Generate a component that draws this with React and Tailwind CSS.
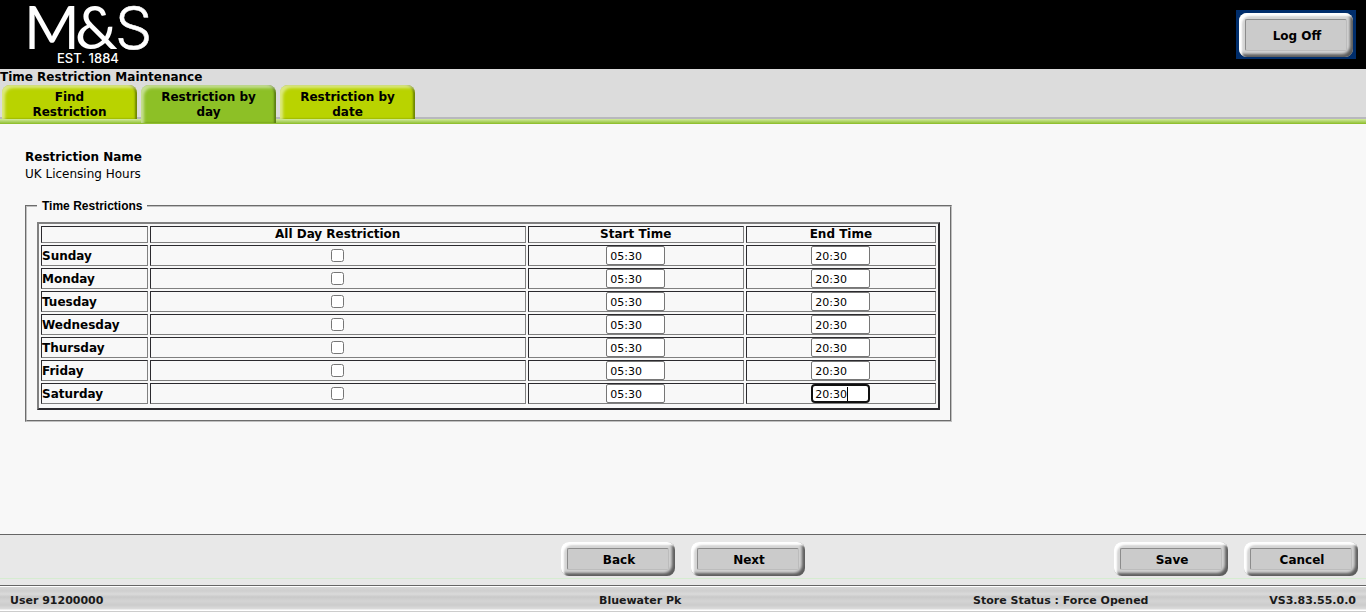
const days = ['Sunday', 'Monday', 'Tuesday', 'Wednesday', 'Thursday', 'Friday', 'Saturday'];
const tabs = [
  { first: 'Find', second: 'Restriction' },
  { first: 'Restriction by', second: 'day', active: true },
  { first: 'Restriction by', second: 'date' },
];

function Logo() {
  return (
    <svg className="ml-6 block h-[69px] w-[132px] overflow-visible" viewBox="24 0 132 69" role="img" aria-label="M&S EST. 1884">
      <g fill="#fff" fontFamily="Lato, sans-serif">
        <text x="24 75" y="49" fontSize="60">M&amp;</text>
        <text x="115" y="49" fontSize="59" fontFamily="Inter, sans-serif" fontWeight="300" stroke="#fff" strokeWidth="0.5">S</text>
        <text x="57" y="63" fontSize="13" fontFamily="Inter, sans-serif" fontWeight="500">EST. 1884</text>
      </g>
    </svg>
  );
}

function BevelButton({ children, tall }) {
  return (
    <button
      type="button"
      className={`flex w-[114px] rounded-lg bg-[#d4d4d4] p-1.5 shadow-[inset_3px_3px_2px_#ffffff,inset_-3px_-3px_3px_#5c5c5c] ${tall ? 'h-11' : 'h-[34px]'}`}
    >
      <span className="flex h-full w-full items-center justify-center rounded-xs border border-t-[#8c8c8c] border-r-[#bcbcbc] border-b-[#bcbcbc] border-l-[#8c8c8c] bg-[#cbcbcb] pt-0.5 pl-0.5 text-[12px] leading-4 font-bold text-black">
        {children}
      </span>
    </button>
  );
}

function Tab({ first, second, active }) {
  return (
    <a
      href="#"
      aria-current={active ? 'page' : undefined}
      className={`w-[135px] rounded-t-lg pt-[5px] text-center leading-[15px] shadow-[inset_3px_3px_3px_rgba(255,255,255,0.5),inset_-2px_0_2px_rgba(50,70,0,0.55)] ${active ? 'h-[38px] bg-[#8dc026]' : 'h-[34px] bg-[#b9d300]'}`}
    >
      {first}
      <br />
      {second}
    </a>
  );
}

const cell = 'border border-t-[#2b2a2e] border-l-[#2b2a2e] border-r-[#808080] border-b-[#808080] p-0';
const timeBox =
  'block mx-auto h-[19px] w-[59px] rounded-xs border border-[#767676] bg-white px-[3px] pt-0.5 text-[11px] leading-4 text-black outline-none focus:border-2 focus:border-[#101010] focus:px-0.5 focus:rounded-sm';

export default function App() {
  return (
    <div className="flex min-h-screen flex-col bg-[#f8f8f8] font-['DejaVu_Sans',sans-serif] text-[12px] text-black">
      <header className="flex h-[69px] items-center justify-between bg-black pr-2.5">
        <Logo />
        <div className="bg-[#002d6b] px-[3px] pt-[3px] pb-0.5">
          <BevelButton tall>Log Off</BevelButton>
        </div>
      </header>

      <div className="h-[55px] bg-[#dcdcdc] font-bold">
        <h1 className="leading-4">Time Restriction Maintenance</h1>
        <div className="flex h-[39px] flex-col justify-end">
          <div className="h-[7px] border-t-2 border-[#b8b8bd] bg-linear-to-b from-[#d3eb9b] to-[#8abb1b]" />
          <nav className="relative -mt-[39px] flex h-[39px] items-start gap-1 pl-0.5">
            {tabs.map((t, i) => (
              <Tab key={i} {...t} />
            ))}
          </nav>
        </div>
      </div>

      <main className="flex-1 px-[25px] pt-[25px]">
        <h2 className="font-bold leading-[17px]">Restriction Name</h2>
        <p className="leading-[17px]">UK Licensing Hours</p>

        <fieldset className="mt-4 w-full max-w-[927px] border-2 border-[#c0c0c0] [border-style:groove] px-2.5 pb-2.5">
          <legend className="px-[5px] font-['Liberation_Sans',sans-serif] leading-[14px] font-bold">Time Restrictions</legend>
          <table className="mt-[9px] w-full table-fixed border-separate border-spacing-0.5 border-2 border-t-[#808080] border-r-[#2b2a2e] border-b-[#2b2a2e] border-l-[#808080] pb-0.5">
            <colgroup>
              <col className="w-[12%]" />
              <col className="w-[42.3%]" />
              <col className="w-[24.3%]" />
              <col />
            </colgroup>
            <thead>
              <tr className="h-[17px] leading-[15px]">
                <td className={cell} />
                <th className={cell}>All Day Restriction</th>
                <th className={cell}>Start Time</th>
                <th className={cell}>End Time</th>
              </tr>
            </thead>
            <tbody>
              {days.map((day) => (
                <tr key={day} className="h-[21px] leading-[18px]">
                  <th scope="row" className={`${cell} text-left`}>{day}</th>
                  <td className={cell}>
                    <input type="checkbox" aria-label={`${day} all day restriction`} className="mx-auto block size-[13px]" />
                  </td>
                  <td className={cell}>
                    <input type="text" aria-label={`${day} start time`} defaultValue="05:30" className={timeBox} />
                  </td>
                  <td className={cell}>
                    <div className="relative mx-auto w-[59px]">
                      <input
                        type="text"
                        aria-label={`${day} end time`}
                        defaultValue="20:30"
                        autoFocus={day === 'Saturday'}
                        className={`${timeBox} peer caret-transparent`}
                      />
                      <span className="absolute top-[3px] left-9 hidden h-3.5 w-px bg-black peer-focus:block" />
                    </div>
                  </td>
                </tr>
              ))}
            </tbody>
          </table>
        </fieldset>
      </main>

      <footer>
        <div className="grid h-[45px] grid-cols-[1fr_auto_1fr] items-center border-y border-t-[#666666] border-b-[#d5ecd0] bg-[#e8e8e8] px-2 pt-1">
          <span />
          <div className="flex gap-4">
            <BevelButton>Back</BevelButton>
            <BevelButton>Next</BevelButton>
          </div>
          <div className="flex justify-end gap-4">
            <BevelButton>Save</BevelButton>
            <BevelButton>Cancel</BevelButton>
          </div>
        </div>
        <div className="h-[7px] border-b border-[#666666] bg-[#e8e8e8]" />
        <div className="grid h-[26px] grid-cols-[589fr_374fr_383fr] items-center border-t border-white bg-[linear-gradient(#d6d6d6_0,#cfcfcf_4px,#dadada_7px,#c9c9c9_10px,#d4d4d4_14px,#cccccc_18px,#dcdcdc_22px,#ffffff_23px,#ffffff_24px,#cccccc_24px)] px-2.5 pt-0.5 text-[11px] leading-4 font-bold text-[#1a1a1a]">
          <span>User 91200000</span>
          <span>Bluewater Pk</span>
          <div className="flex justify-between">
            <span>Store Status : Force Opened</span>
            <span>VS3.83.55.0.0</span>
          </div>
        </div>
      </footer>
    </div>
  );
}
